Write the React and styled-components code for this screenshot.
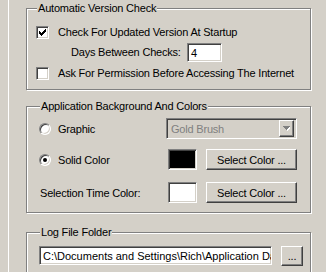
import React from "react";
import styled, { createGlobalStyle, css } from "styled-components";

const GlobalStyle = createGlobalStyle`
  html, body {
    margin: 0;
    padding: 0;
    background: #d4d0c8;
  }
  body {
    font-family: "Liberation Sans", Arial, sans-serif;
    font-size: 11px;
    letter-spacing: -0.2px;
    color: #000;
  }
`;

const sunken = css`
  box-sizing: border-box;
  border: 1px solid;
  border-color: #808080 #ffffff #ffffff #808080;
  box-shadow: inset 1px 1px 0 #404040, inset -1px -1px 0 #d4d0c8;
`;

const raised = css`
  box-sizing: border-box;
  border: 1px solid;
  border-color: #ffffff #404040 #404040 #ffffff;
  box-shadow: inset -1px -1px 0 #808080;
  background: #d4d0c8;
`;

const Page = styled.div`
  margin-left: 8px;
  height: 272px;
  overflow: hidden;
  border-left: 1px solid #ffffff;
  padding: 2px 0 0 17px;
  box-sizing: border-box;
`;

const Group = styled.fieldset`
  width: 285px;
  margin: ${(p) => p.$top || 0}px 0 0 0;
  padding: ${(p) => p.$pad || "0"};
  box-sizing: border-box;
  border: 1px solid #808080;
  box-shadow: inset 1px 1px 0 #ffffff, 1px 1px 0 #ffffff;
  min-width: 0;
`;

const Legend = styled.legend`
  margin-left: 1px;
  padding: 0 1px;
  height: 13px;
  line-height: 13px;
  background: #d4d0c8;
`;

const Row = styled.div`
  display: flex;
  align-items: center;
  height: ${(p) => p.$h || 20}px;
  margin-top: ${(p) => p.$mt || 0}px;
  padding-left: ${(p) => p.$indent || 0}px;
`;

const Box = styled.span`
  ${sunken};
  width: 13px;
  height: 13px;
  background: #fff;
  display: flex;
  align-items: center;
  justify-content: center;
  flex: none;
`;

const Radio = styled.span`
  box-sizing: border-box;
  width: 12px;
  height: 12px;
  border-radius: 50%;
  border: 1px solid;
  border-color: #808080 #ffffff #ffffff #808080;
  background: #fff;
  box-shadow: inset 1px 1px 0 #404040, inset -1px -1px 0 #d4d0c8;
  display: flex;
  align-items: center;
  justify-content: center;
  flex: none;
  &::after {
    content: "";
    width: 4px;
    height: 4px;
    border-radius: 50%;
    background: ${(p) => (p.$checked ? "#000" : "transparent")};
  }
`;

const Caption = styled.span`
  margin-left: ${(p) => p.$gap || 0}px;
  width: ${(p) => (p.$w ? `${p.$w}px` : "auto")};
  flex: none;
  white-space: nowrap;
`;

const TextBox = styled.div`
  ${sunken};
  width: ${(p) => p.$w}px;
  height: 19px;
  background: #fff;
  padding: 2px 0 0 3px;
  line-height: 14px;
  letter-spacing: 0;
  overflow: hidden;
  white-space: nowrap;
  flex: none;
`;

const Combo = styled.div`
  ${sunken};
  width: 131px;
  height: 21px;
  display: flex;
  align-items: center;
  justify-content: space-between;
  padding: 0 2px 0 4px;
  color: #808080;
  flex: none;
`;

const ComboArrow = styled.span`
  ${raised};
  width: 15px;
  height: 17px;
  display: flex;
  align-items: center;
  justify-content: center;
`;

const Swatch = styled.span`
  ${sunken};
  width: 29px;
  height: 21px;
  margin-left: 2px;
  background: ${(p) => p.$color};
  flex: none;
`;

const Button = styled.div`
  ${raised};
  width: ${(p) => p.$w}px;
  height: ${(p) => p.$h || 21}px;
  margin-left: ${(p) => p.$gap || 0}px;
  display: flex;
  align-items: center;
  justify-content: center;
  flex: none;
`;

const Check = () => (
  <svg width="7" height="7" viewBox="0 0 7 7" shapeRendering="crispEdges">
    <path
      fill="#000"
      d="M6 0h1v3h-1zM5 1h1v3h-1zM4 2h1v3h-1zM0 2h1v3h-1zM1 3h1v3h-1zM2 4h1v3h-1zM3 3h1v3h-1z"
    />
  </svg>
);

const Arrow = () => (
  <svg width="7" height="5" viewBox="0 0 7 5" shapeRendering="crispEdges">
    <path fill="#ffffff" d="M1 1h7v1h-1v1h-1v1h-1v1h-1v-1h-1v-1h-1v-1h-1z" />
    <path fill="#808080" d="M0 0h7v1h-1v1h-1v1h-1v1h-1v-1h-1v-1h-1v-1h-1z" />
  </svg>
);

export default function App() {
  return (
    <>
      <GlobalStyle />
      <Page>
        <Group $pad="7px 0 5px 9px">
          <Legend>Automatic Version Check</Legend>
          <Row>
            <Box>
              <Check />
            </Box>
            <Caption $gap={9}>Check For Updated Version At Startup</Caption>
          </Row>
          <Row $indent={35}>
            <Caption $w={116}>Days Between Checks:</Caption>
            <TextBox $w={35}>4</TextBox>
          </Row>
          <Row $h={22}>
            <Box />
            <Caption $gap={9}>Ask For Permission Before Accessing The Internet</Caption>
          </Row>
        </Group>

        <Group $top={10} $pad="5px 0 9px 12px">
          <Legend>Application Background And Colors</Legend>
          <Row $h={21}>
            <Radio />
            <Caption $gap={7} $w={108}>Graphic</Caption>
            <Combo>
              <span>Gold Brush</span>
              <ComboArrow>
                <Arrow />
              </ComboArrow>
            </Combo>
          </Row>
          <Row $h={21} $mt={10}>
            <Radio $checked />
            <Caption $gap={7} $w={108}>Solid Color</Caption>
            <Swatch $color="#000000" />
            <Button $w={91} $gap={9}>Select Color ...</Button>
          </Row>
          <Row $h={21} $mt={12} $indent={1}>
            <Caption $w={126}>Selection Time Color:</Caption>
            <Swatch $color="#ffffff" />
            <Button $w={91} $gap={9}>Select Color ...</Button>
          </Row>
        </Group>

        <Group $top={13} $pad="6px 0 20px 12px">
          <Legend>Log File Folder</Legend>
          <Row $h={21}>
            <TextBox $w={233}>C:\Documents and Settings\Rich\Application Data</TextBox>
            <Button $w={22} $h={20} $gap={9}>...</Button>
          </Row>
        </Group>
      </Page>
    </>
  );
}
